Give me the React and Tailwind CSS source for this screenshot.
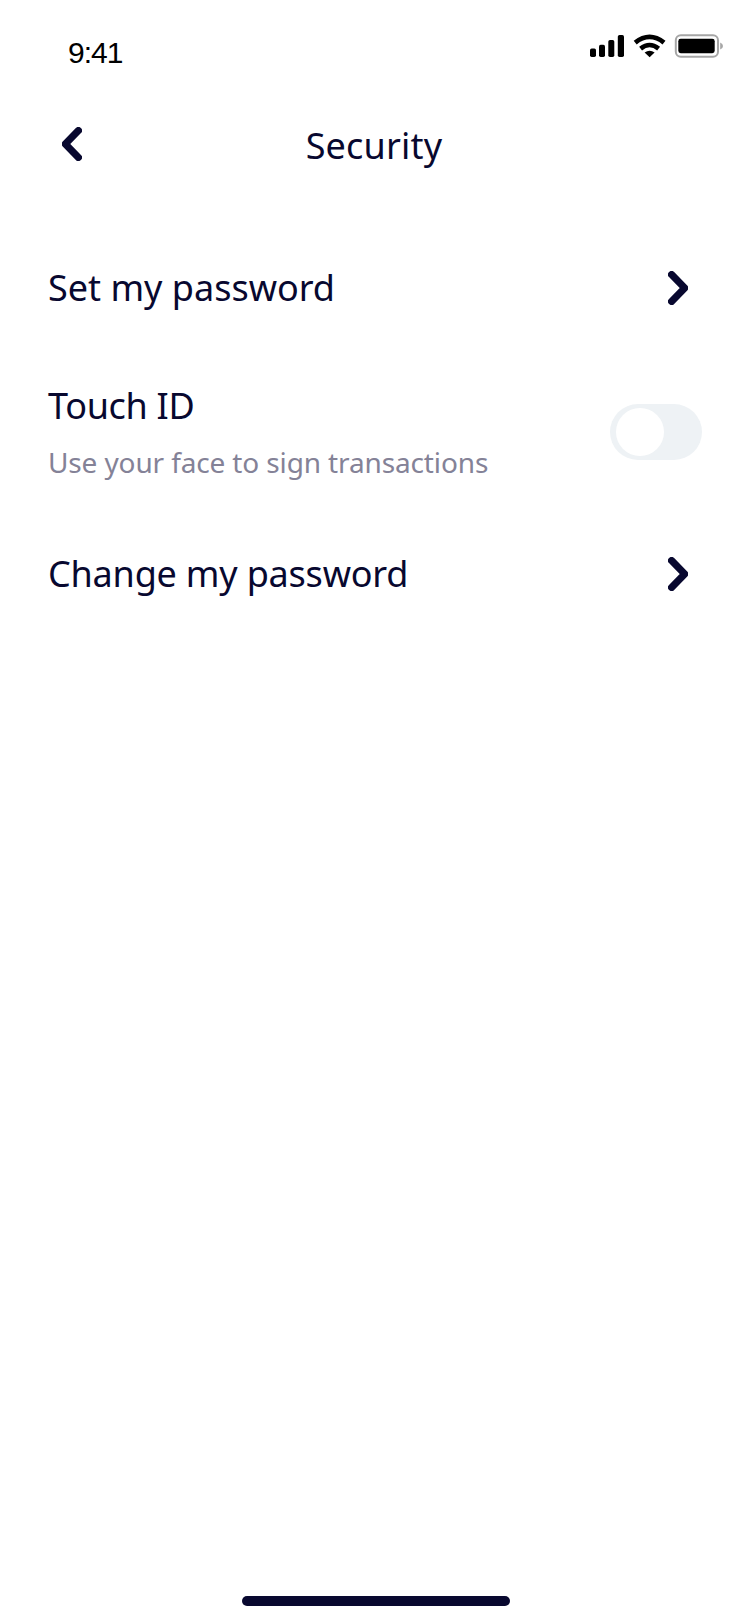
import React from 'react';

function StatusBar() {
  return (
    <div className="flex h-24 shrink-0 justify-between pl-[68px] pr-[26px]">
      <span className="mt-[35px] font-['Liberation_Sans',sans-serif] text-[30px] leading-9 tracking-[-1px] text-black">9:41</span>
      <svg className="mt-[33px]" width="136" height="26" viewBox="588 33 136 26" fill="none">
        <g fill="#000">
          <rect x="590" y="48.5" width="6" height="8.5" rx="1.7" />
          <rect x="599" y="44.8" width="6" height="12.2" rx="1.7" />
          <rect x="608.3" y="40" width="6" height="17" rx="1.7" />
          <rect x="617.8" y="35" width="6.2" height="22" rx="1.7" />
          <path d="M649.6 57.2 L644.6 52.6 Q649.6 48.8 654.6 52.6 Z" />
          <rect x="678.3" y="38.8" width="36.4" height="14.4" rx="2.4" />
        </g>
        <path d="M635.2 42.6 Q649.6 31.2 664 42.6" stroke="#000" strokeWidth="4.8" />
        <path d="M640.6 48.6 Q649.6 41.4 658.6 48.6" stroke="#000" strokeWidth="4.6" />
        <rect x="675.8" y="35.3" width="42.2" height="21.4" rx="5" stroke="#a6a6a6" strokeWidth="2" />
        <path d="M720.2 42.4 Q723 43.4 723 46 Q723 48.6 720.2 49.6 Z" fill="#a6a6a6" />
      </svg>
    </div>
  );
}

function Chevron({ className = '' }) {
  return (
    <svg className={className} width="20" height="34" viewBox="0 0 20 34" fill="none" stroke="#08082f" strokeWidth="7.2" strokeLinecap="round" strokeLinejoin="round">
      <path d="M3.6 3.6 L16.7 17 L3.6 30.4" />
    </svg>
  );
}

function Row({ label, tracking }) {
  return (
    <button className="flex h-16 w-full items-center justify-between pl-12 pr-[62px] text-left">
      <span className={`text-[36px] leading-[48px] ${tracking}`}>{label}</span>
      <Chevron />
    </button>
  );
}

export default function App() {
  return (
    <div className="flex h-[1624px] w-[750px] flex-col overflow-hidden bg-white font-['Noto_Sans',sans-serif] text-[#08082f]">
      <StatusBar />
      <header className="grid h-24 shrink-0 grid-cols-[62px_1fr_62px] items-center">
        <button className="col-start-1 flex justify-end"><Chevron className="-mr-5 rotate-180" /></button>
        <h1 className="pr-0.5 pt-[3px] text-center text-[36px] leading-[48px] tracking-[0.2px]">Security</h1>
      </header>
      <main className="flex flex-1 flex-col pt-16">
        <Row label="Set my password" tracking="tracking-[0px]" />
        <div className="mt-14 flex h-[112px] items-center justify-between pl-12 pr-12">
          <div className="flex flex-col pb-0.5">
            <span className="text-[36px] leading-[48px] tracking-[-0.3px]">Touch ID</span>
            <span className="mt-3.5 text-[28px] leading-9 tracking-[-0.13px] text-[#848297]">Use your face to sign transactions</span>
          </div>
          <button role="switch" aria-checked="false" className="flex h-14 w-[92px] items-center rounded-full bg-[#eef2f5] pl-1.5">
            <span className="size-12 rounded-full bg-white" />
          </button>
        </div>
        <div className="mt-[54px]">
          <Row label="Change my password" tracking="tracking-[-0.2px]" />
        </div>
      </main>
      <div className="mb-[18px] ml-[242px] h-2.5 w-[268px] shrink-0 rounded-full bg-[#08082f]" />
    </div>
  );
}
